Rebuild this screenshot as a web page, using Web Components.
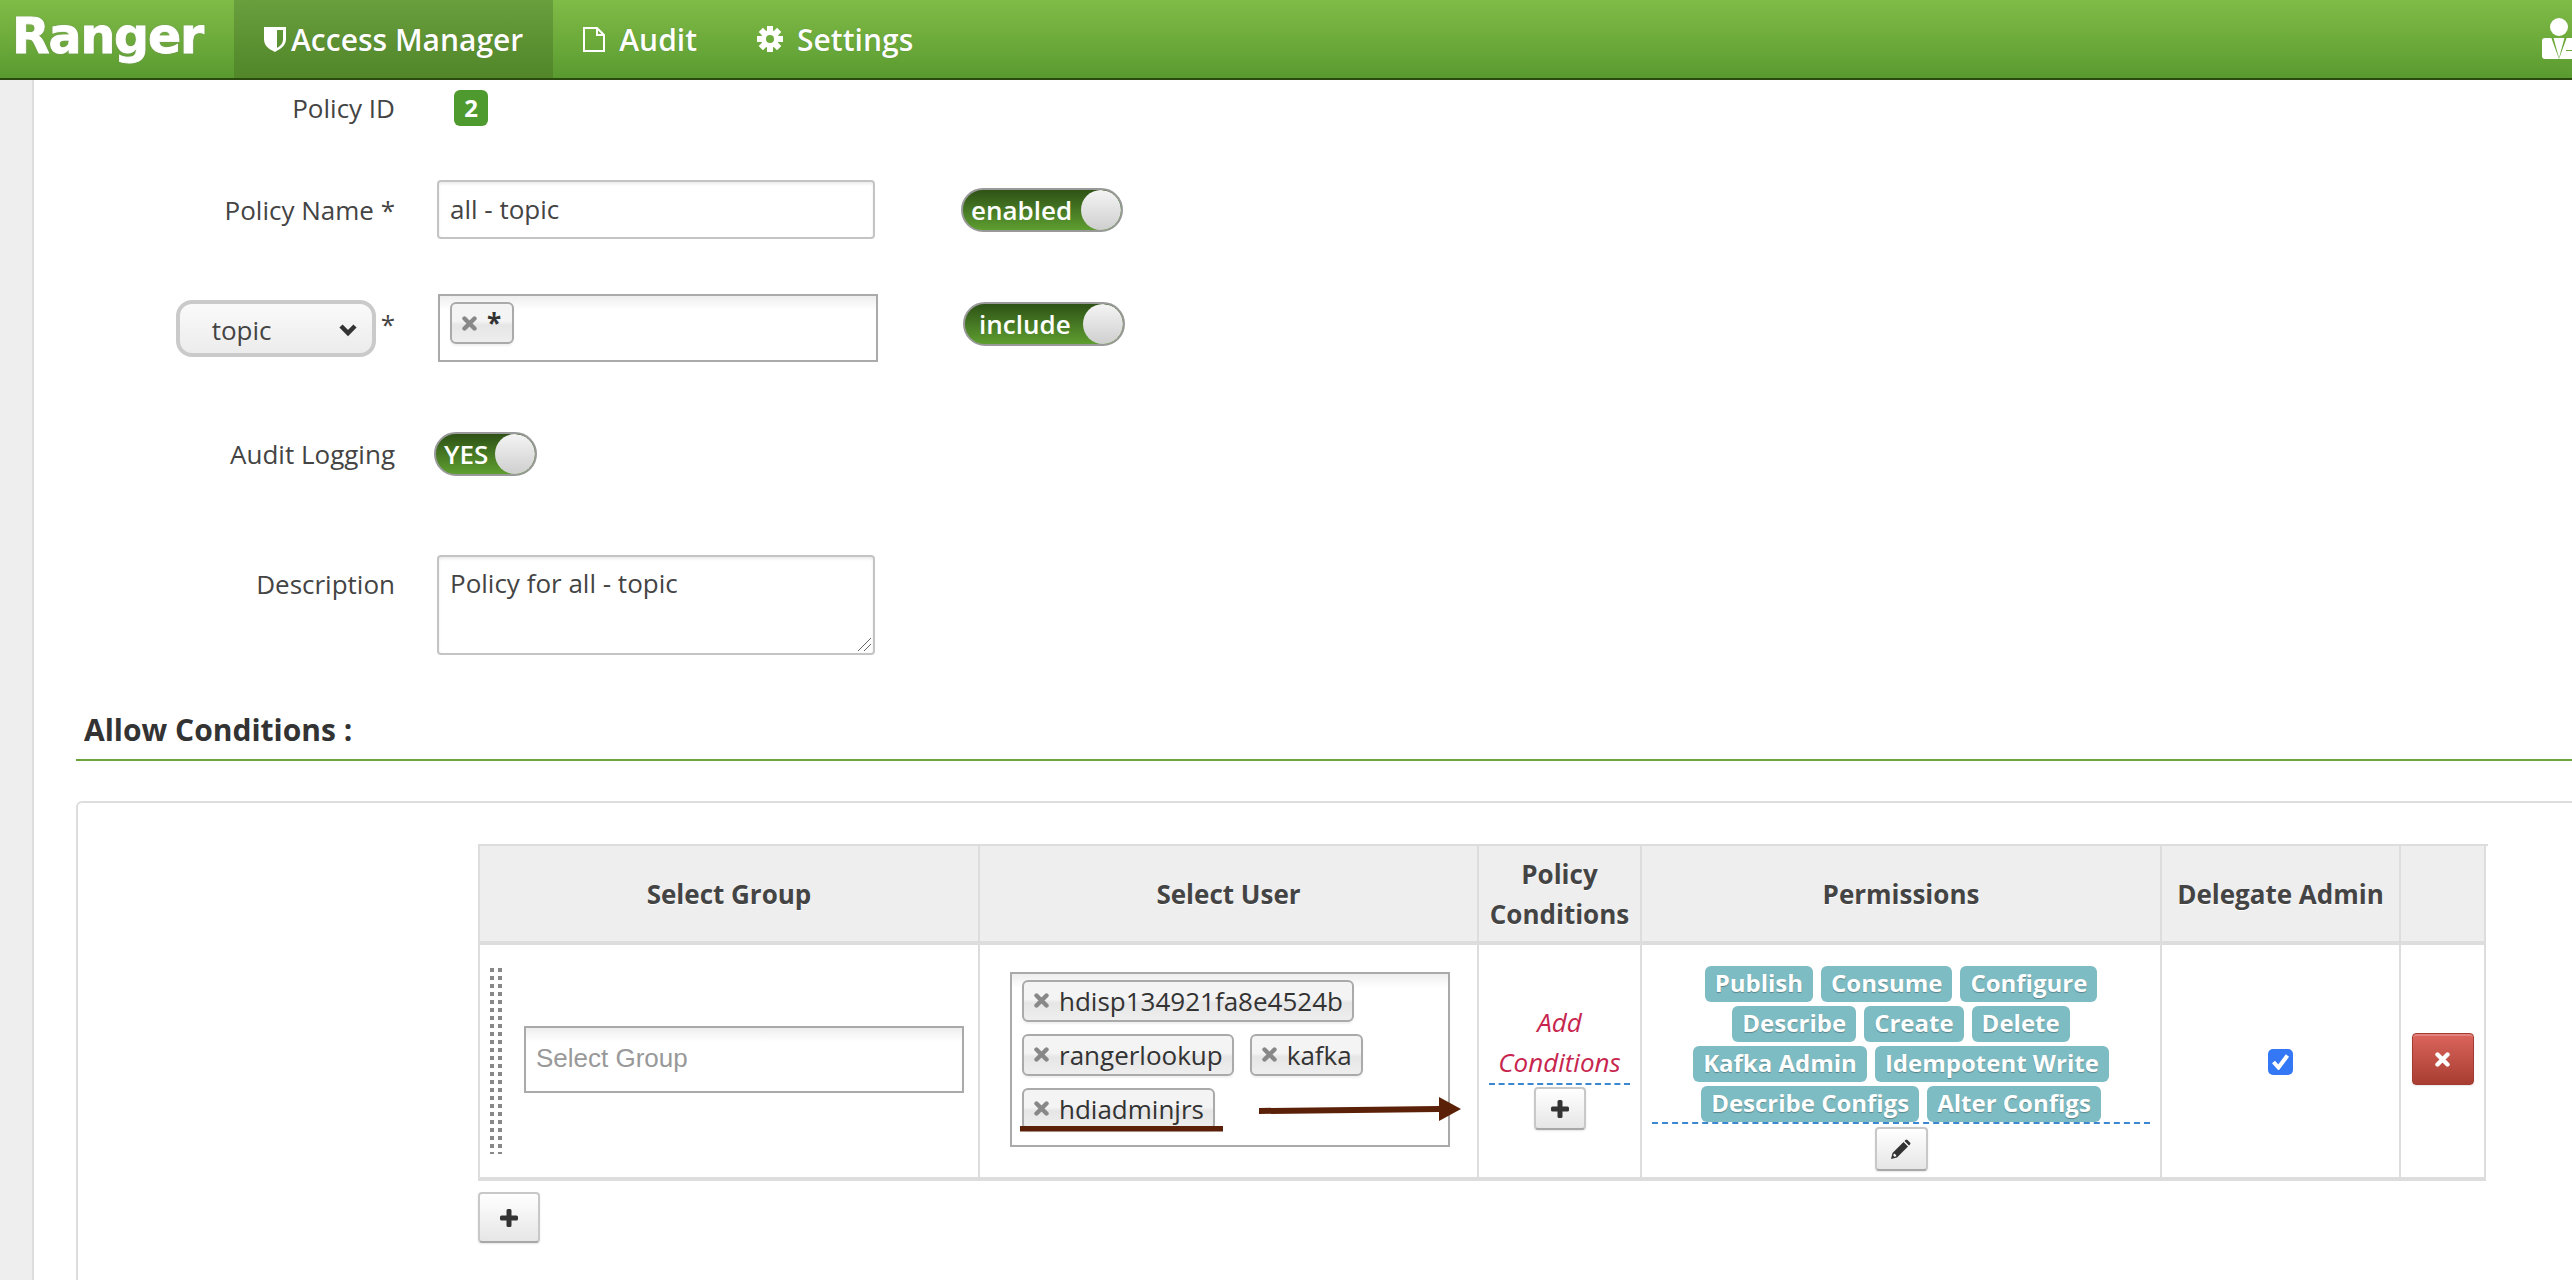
<!DOCTYPE html>
<html>
<head>
<meta charset="utf-8">
<title>Ranger</title>
<style>
    html, body { margin: 0; height: 100%; overflow: hidden; background: white; }
    body { font: 26px/1.4 "Open Sans", sans-serif; color: #444; display: flex; flex-direction: column; }
    .page { flex: 1; display: flex; min-height: 0; }
    .main { flex: 1; min-width: 0; }
    .nav-icon { fill: white; flex: none; }
</style>
</head>
<body>
<ranger-header>
    <nav-item active gap="5">
        <svg slot="icon" class="nav-icon" width="22" height="25" viewBox="0 0 22 25"><path fill-rule="evenodd" d="M0 0h22v12c0 7-6 10-11 13C5 22 0 19 0 12zM13 3v18c3-2 6-4 6-9V3z"/></svg>
        Access Manager
    </nav-item>
    <nav-item gap="14">
        <svg slot="icon" width="22" height="25" viewBox="0 0 22 25" fill="none" stroke="white" stroke-width="2"><path d="M1 1h13l7 7v16H1zM14 1v7h7"/></svg>
        Audit
    </nav-item>
    <nav-item gap="14">
        <svg slot="icon" width="26" height="26" viewBox="-13 -13 26 26">
            <g fill="white">
                <path d="M-3-13h6v6h-6z"/>
                <path d="M-3-13h6v6h-6z" transform="rotate(45)"/>
                <path d="M-3-13h6v6h-6z" transform="rotate(90)"/>
                <path d="M-3-13h6v6h-6z" transform="rotate(135)"/>
                <path d="M-3-13h6v6h-6z" transform="rotate(180)"/>
                <path d="M-3-13h6v6h-6z" transform="rotate(225)"/>
                <path d="M-3-13h6v6h-6z" transform="rotate(270)"/>
                <path d="M-3-13h6v6h-6z" transform="rotate(315)"/>
            </g>
            <circle r="6.500" fill="none" stroke="white" stroke-width="5"/>
        </svg>
        Settings
    </nav-item>
</ranger-header>
<div class="page">
    <side-strip></side-strip>
    <div class="main">
        <policy-form></policy-form>
    </div>
</div>

<script>
class RangerHeader extends HTMLElement {
    constructor() {
        super();
        this.attachShadow({ mode: 'open' });
        this.shadowRoot.innerHTML = `
            <style>
                :host {
                    display: flex;
                    flex: none;
                    height: 78px;
                    border-bottom: 2px solid #2a4a10;
                    background: linear-gradient(#80bb47, #5a9b30);
                    overflow: hidden;
                }
                .logo {
                    width: 222px;
                    padding-left: 12px;
                    font: bold 49px/74px "DejaVu Sans", sans-serif;
                    letter-spacing: -1.2px;
                    color: white;
                    -webkit-text-stroke: 0.8px white;
                    text-shadow: 0 0 2px #888;
                }
                .user {
                    margin-left: auto;
                    width: 30px;
                    padding-top: 18px;
                }
                svg { display: block; overflow: visible; }
            </style>
            <div class="logo">Ranger</div>
            <slot></slot>
            <div class="user">
                <svg width="30" height="42" viewBox="0 0 30 42">
                    <circle cx="17" cy="9" r="9" fill="white"/>
                    <path fill="white" d="M3 20h27v21H3q-3 0-3-3V23q0-3 3-3z"/>
                    <path fill="#6ba93b" d="M9 19l8 22 8-22-2-1-6 22-6-22z"/>
                    <path fill="#6ba93b" d="M24 32h8v1h-8z"/>
                </svg>
            </div>
        `;
    }
}

class NavItem extends HTMLElement {
    constructor() {
        super();
        this.attachShadow({ mode: 'open' });
        this.shadowRoot.innerHTML = `
            <style>
                :host {
                    display: flex;
                    align-items: center;
                    padding: 0 30px;
                    gap: ${this.getAttribute('gap') || 10}px;
                    font: 600 30px "Open Sans", sans-serif;
                    color: white;
                    text-shadow: 0 0 1px rgba(0, 0, 0, 0.25);
                }
                :host([active]) {
                    background: linear-gradient(#6a9f3e, #518629);
                }
            </style>
            <slot name="icon"></slot>
            <slot></slot>
        `;
    }
}

class SideStrip extends HTMLElement {
    constructor() {
        super();
        this.attachShadow({ mode: 'open' });
        this.shadowRoot.innerHTML = `
            <style>
                :host {
                    display: block;
                    flex: none;
                    width: 32px;
                    background: #eee;
                    border-right: 2px solid #ddd;
                }
            </style>
        `;
    }
}

class FormRow extends HTMLElement {
    constructor() {
        super();
        this.attachShadow({ mode: 'open' });
        this.shadowRoot.innerHTML = `
            <style>
                :host {
                    display: grid;
                    grid-template-columns: 361px 1fr;
                    column-gap: 42px;
                    align-items: center;
                }
                :host([top]) { align-items: start; }
                .label {
                    display: flex;
                    justify-content: flex-end;
                    align-items: center;
                }
                .control {
                    display: flex;
                    align-items: center;
                }
            </style>
            <div class="label"><slot name="label"></slot></div>
            <div class="control"><slot></slot></div>
        `;
    }
}

class ToggleSwitch extends HTMLElement {
    constructor() {
        super();
        this.attachShadow({ mode: 'open' });
        this.shadowRoot.innerHTML = `
            <style>
                :host {
                    display: inline-flex;
                    box-sizing: border-box;
                    height: 44px;
                    align-items: center;
                    border: 2px solid #999;
                    border-radius: 22px;
                    background: linear-gradient(#2e5216, #5e9e30);
                    color: white;
                    font: 600 26px "Open Sans", sans-serif;
                    overflow: hidden;
                    flex: none;
                }
                .text { flex: 1; padding-left: var(--toggle-pad, 8px); line-height: 40px; }
                .knob {
                    width: 40px;
                    height: 40px;
                    border-radius: 50%;
                    background: linear-gradient(#f4f4f4, #cfcfcf);
                    flex: none;
                }
            </style>
            <span class="text"><slot></slot></span>
            <span class="knob"></span>
        `;
    }
}

class TextBox extends HTMLElement {
    constructor() {
        super();
        this.attachShadow({ mode: 'open' });
        this.shadowRoot.innerHTML = `
            <style>
                :host {
                    display: block;
                    box-sizing: border-box;
                    position: relative;
                    flex: none;
                    width: 438px;
                    padding: 0 11px;
                    border: 2px solid #c4c4c4;
                    border-radius: 4px;
                    box-shadow: inset 0 2px 3px rgba(0, 0, 0, 0.08);
                    background: white;
                }
                svg { position: absolute; right: 1px; bottom: 1px; }
            </style>
            <slot></slot>
            ${this.hasAttribute('resize') ? '<svg width="16" height="16" viewBox="0 0 16 16" fill="none" stroke="#666" stroke-width="1"><path d="M2 15L15 2M8 15l7-7"/></svg>' : ''}
        `;
    }
}

class CloseIcon extends HTMLElement {
    constructor() {
        super();
        this.attachShadow({ mode: 'open' });
        this.shadowRoot.innerHTML = `
            <style>
                :host { display: inline-flex; flex: none; }
            </style>
            <svg width="${this.getAttribute('size') || 15}" height="${this.getAttribute('size') || 15}" viewBox="0 0 15 15">
                <path d="M2.5 2.5l10 10M12.5 2.5l-10 10" stroke="${this.getAttribute('color') || '#888'}" stroke-width="4.4" stroke-linecap="round"/>
            </svg>
        `;
    }
}

class TagChip extends HTMLElement {
    constructor() {
        super();
        this.attachShadow({ mode: 'open' });
        this.shadowRoot.innerHTML = `
            <style>
                :host {
                    display: inline-flex;
                    align-items: center;
                    box-sizing: border-box;
                    height: 42px;
                    padding: 0 9px 0 10px;
                    gap: 10px;
                    border: 2px solid #aaa;
                    border-radius: 6px;
                    background: linear-gradient(#f4f4f4 45%, #e6e6e6 55%, #eee);
                    box-shadow: 0 2px 2px rgba(0, 0, 0, 0.06);
                    color: #333;
                    font-size: 26px;
                }
            </style>
            <close-icon></close-icon>
            <slot></slot>
        `;
    }
}

class TagInput extends HTMLElement {
    constructor() {
        super();
        this.attachShadow({ mode: 'open' });
        this.shadowRoot.innerHTML = `
            <style>
                :host {
                    display: flex;
                    flex-wrap: wrap;
                    align-content: flex-start;
                    position: relative;
                    box-sizing: border-box;
                    flex: none;
                    gap: 12px 16px;
                    padding: 6px 10px;
                    border: 2px solid #aaa;
                    background: linear-gradient(#eee, white 14px);
                }
            </style>
            <slot></slot>
        `;
    }
}

class PermLabel extends HTMLElement {
    constructor() {
        super();
        this.attachShadow({ mode: 'open' });
        this.shadowRoot.innerHTML = `
            <style>
                :host {
                    display: inline-block;
                    height: 36px;
                    padding: 0 10px;
                    border-radius: 6px;
                    background: #7dbcc3;
                    color: white;
                    font: bold 24px/34px "Open Sans", sans-serif;
                    text-shadow: 0 1px 1px rgba(0, 0, 0, 0.3);
                    white-space: nowrap;
                }
            </style>
            <slot></slot>
        `;
    }
}

class IconBtn extends HTMLElement {
    constructor() {
        super();
        this.attachShadow({ mode: 'open' });
        this.shadowRoot.innerHTML = `
            <style>
                :host {
                    display: inline-flex;
                    align-items: center;
                    justify-content: center;
                    box-sizing: border-box;
                    flex: none;
                    border: 2px solid #c8c8c8;
                    border-bottom-color: #a8a8a8;
                    border-radius: 4px;
                    background: linear-gradient(white, #e6e6e6);
                    box-shadow: 0 1px 2px rgba(0, 0, 0, 0.1);
                }
                :host([danger]) {
                    border: 1px solid #a33b30;
                    background: linear-gradient(#db655d, #a83d31);
                    box-shadow: inset 0 2px 0 rgba(255, 255, 255, 0.2), 0 1px 2px rgba(0, 0, 0, 0.1);
                }
            </style>
            <slot></slot>
        `;
    }
}

class PolicyTable extends HTMLElement {
    constructor() {
        super();
        this.attachShadow({ mode: 'open' });
        const plus = '<svg width="18" height="18" viewBox="0 0 18 18"><path fill="#333" d="M6.5 1.5q0-1.500 1.500-1.500h2q1.500 0 1.500 1.500v5h5q1.500 0 1.500 1.500v2q0 1.500-1.500 1.500h-5v5q0 1.500-1.500 1.500H8q-1.500 0-1.500-1.500v-5h-5Q0 11.500 0 10V8q0-1.500 1.500-1.500h5z"/></svg>';
        this.shadowRoot.innerHTML = `
            <style>
                :host { display: block; width: 2010px; }
                .grid {
                    display: grid;
                    grid-template-columns: 500px 499px 163px 520px 239px 85px;
                    grid-template-rows: 99px 236px;
                    border: 2px solid #ddd;
                    border-width: 2px 0 0 2px;
                }
                .th, .td {
                    box-sizing: border-box;
                    border-right: 2px solid #ddd;
                    border-bottom: 4px solid #ddd;
                }
                .th {
                    display: flex;
                    align-items: center;
                    justify-content: center;
                    text-align: center;
                    background: #eee;
                    font-weight: 700;
                    font-size: 26px;
                    line-height: 40px;
                    color: #444;
                    text-shadow: 0 1px 0 white;
                }
                .group { display: flex; align-items: center; padding-bottom: 4px; }
                .handle {
                    width: 12px;
                    height: 186px;
                    margin: 4px 22px 0 10px;
                    background:
                        linear-gradient(#888 50%, transparent 50%) 0 0 / 4px 8px repeat-y,
                        linear-gradient(#888 50%, transparent 50%) 8px 0 / 4px 8px repeat-y;
                    flex: none;
                }
                .placeholder {
                    width: 440px;
                    height: 67px;
                    padding: 11px 10px;
                    font: 26px/38px "Liberation Sans", sans-serif;
                    color: #999;
                }
                .user { display: flex; align-items: center; padding: 0 0 4px 30px; }
                .users { width: 440px; height: 175px; }
                .overlay { position: absolute; left: 0; top: 0; overflow: visible; pointer-events: none; }
                .cond {
                    display: flex;
                    flex-direction: column;
                    align-items: center;
                    padding-top: 57px;
                }
                .cond-text {
                    align-self: stretch;
                    margin: 0 10px;
                    padding-bottom: 1px;
                    text-align: center;
                    font-style: italic;
                    font-size: 26px;
                    line-height: 40px;
                    color: #c7254e;
                    border-bottom: 2px dashed #3b87d0;
                }
                .cond icon-btn { width: 52px; height: 43px; margin-top: 2px; }
                .perm {
                    display: flex;
                    flex-direction: column;
                    align-items: center;
                    padding-top: 21px;
                }
                .labels {
                    box-sizing: border-box;
                    width: 498px;
                    height: 158px;
                    display: flex;
                    flex-wrap: wrap;
                    justify-content: center;
                    align-content: flex-start;
                    gap: 4px 8px;
                    border-bottom: 2px dashed #3b87d0;
                }
                .perm icon-btn { width: 53px; height: 44px; margin-top: 3px; }
                .check { display: flex; align-items: center; justify-content: center; padding-top: 1px; }
                .box {
                    width: 25px;
                    height: 26px;
                    border-radius: 5px;
                    background: #3478f6;
                    display: flex;
                    align-items: center;
                    justify-content: center;
                }
                .del { display: flex; align-items: center; justify-content: center; padding-bottom: 4px; }
                .del icon-btn { width: 62px; height: 52px; }
            </style>
            <div class="grid">
                <div class="th">Select Group</div>
                <div class="th">Select User</div>
                <div class="th">Policy<br>Conditions</div>
                <div class="th">Permissions</div>
                <div class="th">Delegate Admin</div>
                <div class="th"></div>

                <div class="td group">
                    <div class="handle"></div>
                    <tag-input class="placeholder">Select Group</tag-input>
                </div>
                <div class="td user">
                    <tag-input class="users">
                        <tag-chip>hdisp134921fa8e4524b</tag-chip>
                        <tag-chip>rangerlookup</tag-chip>
                        <tag-chip>kafka</tag-chip>
                        <tag-chip>hdiadminjrs</tag-chip>
                        <svg class="overlay" width="450" height="175" viewBox="0 0 450 175">
                            <path fill="#5a2108" d="M8 152h203v5.500H8z"/>
                            <path fill="#5a2108" d="M247 134l180-2v-9l22 12-22 12v-9l-180 2z"/>
                        </svg>
                    </tag-input>
                </div>
                <div class="td cond">
                    <div class="cond-text">Add<br>Conditions</div>
                    <icon-btn>${plus}</icon-btn>
                </div>
                <div class="td perm">
                    <div class="labels">
                        <perm-label>Publish</perm-label>
                        <perm-label>Consume</perm-label>
                        <perm-label>Configure</perm-label>
                        <perm-label>Describe</perm-label>
                        <perm-label>Create</perm-label>
                        <perm-label>Delete</perm-label>
                        <perm-label>Kafka Admin</perm-label>
                        <perm-label>Idempotent Write</perm-label>
                        <perm-label>Describe Configs</perm-label>
                        <perm-label>Alter Configs</perm-label>
                    </div>
                    <icon-btn>
                        <svg width="20" height="20" viewBox="0 0 20 20"><path fill="#333" d="M0 20l1.500-6L12.500 3l4.500 4.500L6 18.500zM13.500 2l1-1q1-1 2 0l2.500 2.500q1 1 0 2l-1 1z"/><path fill="white" d="M2.800 14.800l1 0 1.400 1.400 0 1-1.700.5-1.200-1.200z"/></svg>
                    </icon-btn>
                </div>
                <div class="td check">
                    <div class="box">
                        <svg width="19" height="17" viewBox="0 0 19 17"><path d="M2.500 9l5 5.500L16.500 2.500" fill="none" stroke="white" stroke-width="4"/></svg>
                    </div>
                </div>
                <div class="td del">
                    <icon-btn danger><close-icon color="white" size="15"></close-icon></icon-btn>
                </div>
            </div>
            <icon-btn style="width:62px;height:51px;margin-top:11px">${plus}</icon-btn>
        `;
    }
}

class PolicyForm extends HTMLElement {
    constructor() {
        super();
        this.attachShadow({ mode: 'open' });
        this.shadowRoot.innerHTML = `
            <style>
                :host { display: block; }
                .badge {
                    width: 34px;
                    height: 36px;
                    margin-left: 17px;
                    border-radius: 6px;
                    background: #4f9a2f;
                    color: white;
                    font-weight: 700;
                    font-size: 24px;
                    line-height: 36px;
                    text-align: center;
                }
                .id { margin-top: 10px; }
                .name { margin-top: 54px; }
                .res { margin-top: 55px; }
                .audit { margin-top: 70px; }
                .desc { margin-top: 79px; }
                .name text-box { height: 59px; line-height: 55px; }
                .desc text-box { height: 100px; line-height: 44px; padding-top: 4px; }
                .desc span[slot] { margin-top: 11px; }
                .sel {
                    display: flex;
                    align-items: center;
                    gap: 5px;
                }
                .select {
                    box-sizing: border-box;
                    width: 200px;
                    height: 57px;
                    display: flex;
                    align-items: center;
                    justify-content: space-between;
                    padding: 4px 14px 0 32px;
                    border: 4px solid #cacaca;
                    border-radius: 16px;
                    background: linear-gradient(#fafafa, #ececec);
                }
                .star { margin-top: -8px; }
                .res tag-input { width: 440px; height: 68px; margin-left: 1px; }
                .res tag-chip { width: 64px; height: 42px; }
                .on1 { width: 162px; margin-left: 86px; }
                .on2 { width: 162px; margin: 0 0 8px 85px; --toggle-pad: 14px; }
                .on3 { width: 103px; margin-left: -3px; }
                .heading {
                    box-sizing: border-box;
                    height: 62px;
                    margin: 44px 0 0 42px;
                    padding-left: 8px;
                    border-bottom: 2px solid #6fa33c;
                    font-weight: 700;
                    font-size: 30px;
                    line-height: 61px;
                    color: #333;
                }
                .panel {
                    box-sizing: border-box;
                    width: 2600px;
                    height: 500px;
                    margin: 40px 0 0 42px;
                    padding: 41px 0 0 400px;
                    border: 2px solid #ddd;
                    border-radius: 6px;
                }
            </style>
            <form-row class="id">
                <span slot="label">Policy ID</span>
                <div class="badge">2</div>
            </form-row>
            <form-row class="name">
                <span slot="label">Policy Name *</span>
                <text-box>all - topic</text-box>
                <toggle-switch class="on1">enabled</toggle-switch>
            </form-row>
            <form-row class="res">
                <div class="sel" slot="label">
                    <div class="select">
                        <span>topic</span>
                        <svg width="20" height="14" viewBox="0 0 20 14"><path d="M3 3l7 7 7-7" fill="none" stroke="#333" stroke-width="4.500"/></svg>
                    </div>
                    <span class="star">*</span>
                </div>
                <tag-input>
                    <tag-chip><b>*</b></tag-chip>
                </tag-input>
                <toggle-switch class="on2">include</toggle-switch>
            </form-row>
            <form-row class="audit">
                <span slot="label">Audit Logging</span>
                <toggle-switch class="on3">YES</toggle-switch>
            </form-row>
            <form-row class="desc" top>
                <span slot="label">Description</span>
                <text-box resize>Policy for all - topic</text-box>
            </form-row>
            <div class="heading">Allow Conditions :</div>
            <div class="panel">
                <policy-table></policy-table>
            </div>
        `;
    }
}

customElements.define('ranger-header', RangerHeader);
customElements.define('nav-item', NavItem);
customElements.define('side-strip', SideStrip);
customElements.define('form-row', FormRow);
customElements.define('toggle-switch', ToggleSwitch);
customElements.define('text-box', TextBox);
customElements.define('close-icon', CloseIcon);
customElements.define('tag-chip', TagChip);
customElements.define('tag-input', TagInput);
customElements.define('perm-label', PermLabel);
customElements.define('icon-btn', IconBtn);
customElements.define('policy-table', PolicyTable);
customElements.define('policy-form', PolicyForm);
</script>
</body>
</html>
